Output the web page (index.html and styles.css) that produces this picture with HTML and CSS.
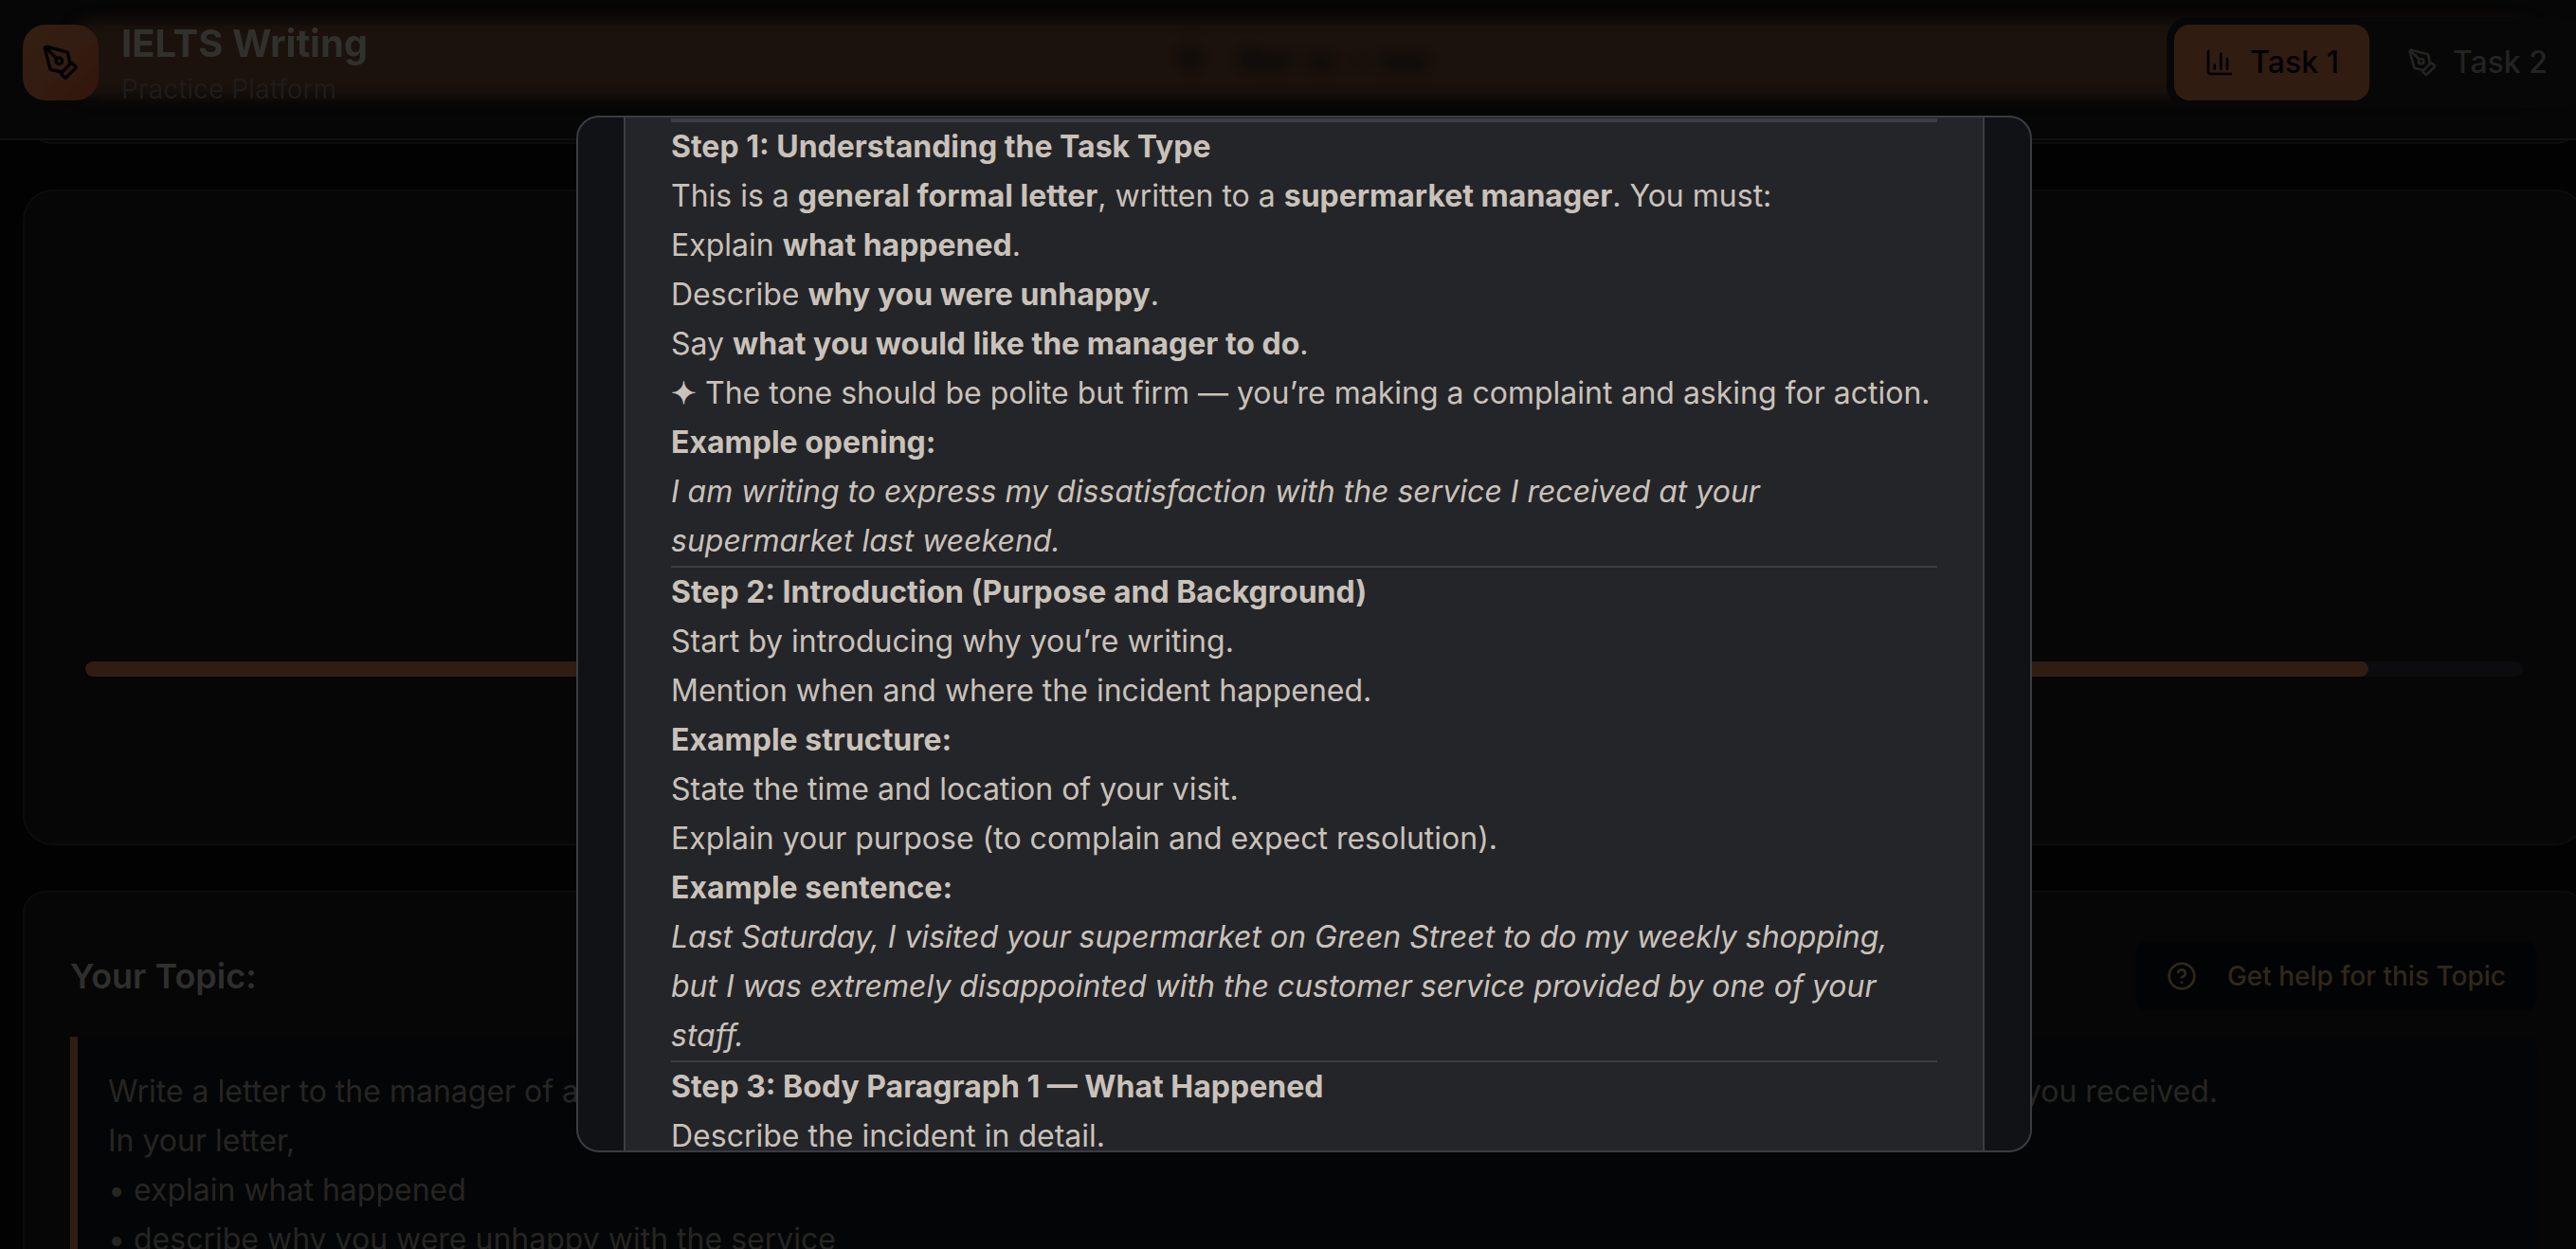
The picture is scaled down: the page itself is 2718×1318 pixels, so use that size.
FILE: index.html
```html
<!DOCTYPE html>
<html lang="en">
<head>
    <meta charset="UTF-8">
    <title>IELTS Writing - Practice Platform</title>
    <link rel="stylesheet" href="styles.css">
</head>
<body>
    <div class="app">
        <header class="header">
            <div class="header-glow" aria-hidden="true">
                <svg class="glow-marks" width="280" height="80" viewBox="0 0 280 80">
                    <circle cx="20" cy="39" r="13"/>
                    <rect x="70" y="30" width="20" height="20"/>
                    <rect x="90" y="35" width="36" height="16"/>
                    <rect x="142" y="35" width="32" height="16"/>
                    <rect x="192" y="39" width="14" height="10"/>
                    <rect x="220" y="35" width="52" height="17"/>
                </svg>
            </div>
            <div class="brand">
                <div class="logo">
                    <svg class="icon icon-logo" viewBox="0 0 24 24">
                        <path d="M15.707 21.293a1 1 0 0 1-1.414 0l-1.586-1.586a1 1 0 0 1 0-1.414l5.586-5.586a1 1 0 0 1 1.414 0l1.586 1.586a1 1 0 0 1 0 1.414z"/>
                        <path d="m18 13-1.375-6.874a1 1 0 0 0-.746-.776L3.235 2.028a1 1 0 0 0-1.207 1.207L5.35 15.879a1 1 0 0 0 .776.746L13 18"/>
                        <path d="m2.3 2.3 7.286 7.286"/>
                        <circle cx="11" cy="11" r="2"/>
                    </svg>
                </div>
                <div>
                    <h1 class="brand-title">IELTS Writing</h1>
                    <p class="brand-sub">Practice Platform</p>
                </div>
            </div>
            <nav class="tabs">
                <button type="button" class="tab tab-active">
                    <svg class="icon" viewBox="0 0 24 24">
                        <path d="M3 3v16a2 2 0 0 0 2 2h16"/>
                        <path d="M18 17V9"/>
                        <path d="M13 17V5"/>
                        <path d="M8 17v-3"/>
                    </svg>
                    Task 1
                </button>
                <button type="button" class="tab">
                    <svg class="icon" viewBox="0 0 24 24">
                        <path d="M15.707 21.293a1 1 0 0 1-1.414 0l-1.586-1.586a1 1 0 0 1 0-1.414l5.586-5.586a1 1 0 0 1 1.414 0l1.586 1.586a1 1 0 0 1 0 1.414z"/>
                        <path d="m18 13-1.375-6.874a1 1 0 0 0-.746-.776L3.235 2.028a1 1 0 0 0-1.207 1.207L5.35 15.879a1 1 0 0 0 .776.746L13 18"/>
                        <path d="m2.3 2.3 7.286 7.286"/>
                        <circle cx="11" cy="11" r="2"/>
                    </svg>
                    Task 2
                </button>
            </nav>
        </header>

        <main class="main">
            <section class="card card-prev"></section>

            <section class="card card-timer">
                <div class="progress">
                    <div class="progress-fill" style="width: 93.67%"></div>
                </div>
            </section>

            <section class="card card-topic">
                <div class="topic-head">
                    <h2 class="topic-title">Your Topic:</h2>
                    <button type="button" class="help-btn">
                        <svg class="icon" viewBox="0 0 24 24">
                            <circle cx="12" cy="12" r="10"/>
                            <path d="M9.09 9a3 3 0 0 1 5.83 1c0 2-3 3-3 3"/>
                            <path d="M12 17h.01"/>
                        </svg>
                        Get help for this Topic
                    </button>
                </div>
                <blockquote class="topic-text">
                    <p>Write a letter to the manager of a supermarket that you visited recently. You were really unhappy with the weak customer service that you received.</p>
                    <p>In your letter,</p>
                    <p>• explain what happened</p>
                    <p>• describe why you were unhappy with the service</p>
                </blockquote>
            </section>
        </main>
    </div>

    <!-- Topic help -->
    <div class="overlay">
        <div class="modal" role="dialog" aria-modal="true" aria-label="Get help for this Topic">
            <article class="guide">
                <hr>
                <hr>
                <p><strong>Step 1: Understanding the Task Type</strong></p>
                <p>This is a <strong>general formal letter</strong>, written to a <strong>supermarket manager</strong>. You must:</p>
                <p>Explain <strong>what happened</strong>.</p>
                <p>Describe <strong>why you were unhappy</strong>.</p>
                <p>Say <strong>what you would like the manager to do</strong>.</p>
                <p><strong>✦</strong> The tone should be polite but firm — you’re making a complaint and asking for action.</p>
                <p><strong>Example opening:</strong></p>
                <p><em>I am writing to express my dissatisfaction with the service I received at your supermarket last weekend.</em></p>
                <hr>
                <p><strong>Step 2: Introduction (Purpose and Background)</strong></p>
                <p>Start by introducing why you’re writing.</p>
                <p>Mention when and where the incident happened.</p>
                <p><strong>Example structure:</strong></p>
                <p>State the time and location of your visit.</p>
                <p>Explain your purpose (to complain and expect resolution).</p>
                <p><strong>Example sentence:</strong></p>
                <p><em>Last Saturday, I visited your supermarket on Green Street to do my weekly shopping, but I was extremely disappointed with the customer service provided by one of your staff.</em></p>
                <hr>
                <p><strong>Step 3: Body Paragraph 1 — What Happened</strong></p>
                <p>Describe the incident in detail.</p>
            </article>
        </div>
    </div>
</body>
</html>
```
FILE: styles.css
```css
* { box-sizing: border-box; margin: 0; padding: 0; }
html, body { height: 100%; overflow: hidden; }
body { font-family: Inter, "Liberation Sans", sans-serif; font-size: 32px; line-height: 52px; background: #020202; color: #262523; }
button { font: inherit; border: 0; cursor: pointer; }

.app { width: calc(100% + 34px); }
.icon { width: 32px; height: 32px; flex: none; fill: none; stroke: currentColor; stroke-width: 2; stroke-linecap: round; stroke-linejoin: round; }

/* header */
.header { position: relative; z-index: 1; display: flex; justify-content: space-between; align-items: flex-start; height: 148px; padding: 18px 24px 0; background: #060606; border-bottom: 2px solid #0f0f10; }
.header-glow { position: absolute; top: 22px; left: 76px; right: 76px; height: 80px; border-radius: 24px; background: #1c120d; filter: blur(8px); display: flex; justify-content: center; align-items: center; }
.glow-marks { fill: #0e0b09; filter: blur(3px); }
.brand { position: relative; display: flex; align-items: center; gap: 24px; }
.logo { display: flex; align-items: center; justify-content: center; width: 80px; height: 80px; border-radius: 24px; background: linear-gradient(135deg, #341f12 0%, #331c11 50%, #33140b 100%); color: #020202; }
.icon-logo { width: 40px; height: 40px; }
.brand-title { font-size: 40px; line-height: 56px; font-weight: 700; color: #30302d; }
.brand-sub { font-size: 28px; line-height: 40px; color: #1e1c1b; }
.tabs { position: relative; display: flex; gap: 8px; padding: 8px; border-radius: 24px; background: #070707; }
.tab { display: flex; align-items: center; gap: 16px; height: 80px; padding: 0 32px; border-radius: 16px; font-weight: 500; background: none; color: #242322; }
.tab-active { background: #311c12; color: #020202; }

/* page cards */
.main { display: flex; flex-direction: column; gap: 48px; padding: 0 24px; }
.card { border: 2px solid #0c0c0d; border-radius: 32px; background: #060606; }
.card-prev { height: 64px; margin-top: -60px; }
.card-timer { height: 692px; padding: 496px 64px 0; }
.progress { height: 16px; border-radius: 8px; background: #0c0b0e; overflow: hidden; }
.progress-fill { height: 100%; border-radius: 8px; background: #311c12; }
.card-topic { padding: 50px 48px 48px; border-radius: 24px; }
.topic-head { display: flex; justify-content: space-between; align-items: center; margin-bottom: 26px; }
.topic-title { font-size: 36px; line-height: 56px; font-weight: 600; color: #2f2f2e; }
.help-btn { display: flex; align-items: center; gap: 32px; height: 76px; padding: 0 32px; border: 2px solid #050506; border-radius: 16px; background: #020304; color: #30291a; font-size: 28px; font-weight: 500; }
.topic-text { padding: 32px; border-left: 8px solid #301c12; border-radius: 0 16px 16px 0; background: #040506; }

/* modal */
.overlay { position: fixed; inset: 0 -34px -20px 0; z-index: 2; display: flex; justify-content: center; padding: 122px 0; }
.modal { width: 100%; max-width: 1536px; padding: 0 48px; border: 2px solid #3b3c42; border-radius: 24px; background: #111216; overflow: hidden; }
.guide { min-height: 100%; padding: 1px 48px 48px; border: 2px solid #3d3e43; border-width: 0 2px; background: #242529; color: #c9c2ba; }
.guide hr { height: 2px; border: 0; background: #3d3d44; }
.guide strong { font-weight: 700; }
```
